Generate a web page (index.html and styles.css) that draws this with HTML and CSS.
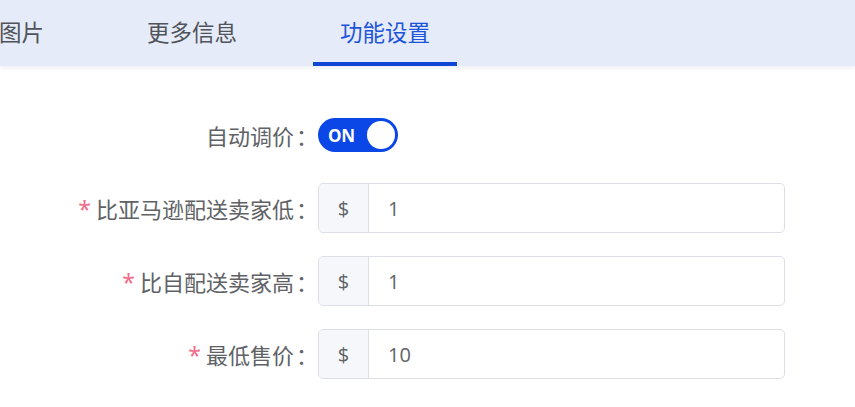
FILE: index.html
```html
<!DOCTYPE html>
<html lang="zh-CN">
<head>
<meta charset="utf-8">
<title>功能设置</title>
<link rel="stylesheet" href="styles.css">
</head>
<body>
<div class="tabs">
  <div class="tab first">图片</div>
  <div class="tab">更多信息</div>
  <div class="tab active">功能设置</div>
</div>
<form class="form">
  <div class="row">
    <label class="label">自动调价<span class="colon">：</span></label>
    <div class="control">
      <span class="switch"><span class="switch-text">ON</span><span class="knob"></span></span>
    </div>
  </div>
  <div class="row">
    <label class="label"><span class="req">*</span>比亚马逊配送卖家低<span class="colon">：</span></label>
    <div class="control">
      <div class="input"><span class="addon">$</span><span class="value">1</span></div>
    </div>
  </div>
  <div class="row">
    <label class="label"><span class="req">*</span>比自配送卖家高<span class="colon">：</span></label>
    <div class="control">
      <div class="input"><span class="addon">$</span><span class="value">1</span></div>
    </div>
  </div>
  <div class="row">
    <label class="label"><span class="req">*</span>最低售价<span class="colon">：</span></label>
    <div class="control">
      <div class="input"><span class="addon">$</span><span class="value">10</span></div>
    </div>
  </div>
</form>
</body>
</html>
```
FILE: styles.css
```css
html, body {
  margin: 0;
  padding: 0;
  background: #ffffff;
  font-family: "Noto Sans CJK SC", "Noto Sans", sans-serif;
  overflow: hidden;
}
.tabs {
  display: flex;
  gap: 49px;
  height: 66px;
  background: #e5ebf8;
  box-shadow: 0 2px 4px rgba(180, 190, 210, 0.25);
  position: relative;
  z-index: 1;
}
.tab {
  box-sizing: border-box;
  height: 66px;
  padding: 0 27px;
  line-height: 62px;
  font-size: 22.5px;
  color: #505359;
  border-bottom: 4px solid transparent;
  white-space: nowrap;
}
.tab.first {
  margin-left: -28px;
}
.tab.active {
  color: #1d55d9;
  border-bottom-color: #1247d6;
}
.form {
  display: flex;
  flex-direction: column;
  gap: 23px;
  padding-top: 44px;
}
.row {
  display: flex;
  align-items: center;
  height: 50px;
}
.label {
  width: 305px;
  flex: none;
  text-align: right;
  font-size: 22px;
  color: #606266;
  white-space: nowrap;
}
.colon {
  margin-left: 2px;
  margin-right: -13px;
}
.req {
  color: #f26d8a;
  font-size: 23px;
  margin-right: 5px;
  font-family: "Noto Sans", sans-serif;
}
.control {
  margin-left: 13px;
  display: flex;
  align-items: center;
}
.switch {
  box-sizing: border-box;
  width: 80px;
  height: 34px;
  border-radius: 17px;
  background: #0a47e6;
  display: flex;
  align-items: center;
  justify-content: space-between;
  padding: 0 3px 0 10px;
}
.switch-text {
  color: #ffffff;
  font-family: "Open Sans", "Noto Sans", sans-serif;
  font-weight: 700;
  font-size: 17px;
  letter-spacing: -0.3px;
}
.knob {
  width: 28px;
  height: 28px;
  border-radius: 50%;
  background: #ffffff;
}
.input {
  box-sizing: border-box;
  width: 467px;
  height: 50px;
  border: 1px solid #dcdfe6;
  border-radius: 5px;
  display: flex;
  align-items: center;
  overflow: hidden;
}
.addon {
  box-sizing: border-box;
  width: 50px;
  height: 100%;
  background: #f5f7fa;
  border-right: 1px solid #dcdfe6;
  display: flex;
  align-items: center;
  justify-content: center;
  font-family: "Open Sans", "Noto Sans", sans-serif;
  font-size: 20px;
  color: #606266;
}
.value {
  padding-left: 19px;
  font-family: "Open Sans", "Noto Sans", sans-serif;
  font-size: 20px;
  color: #606266;
}
```
